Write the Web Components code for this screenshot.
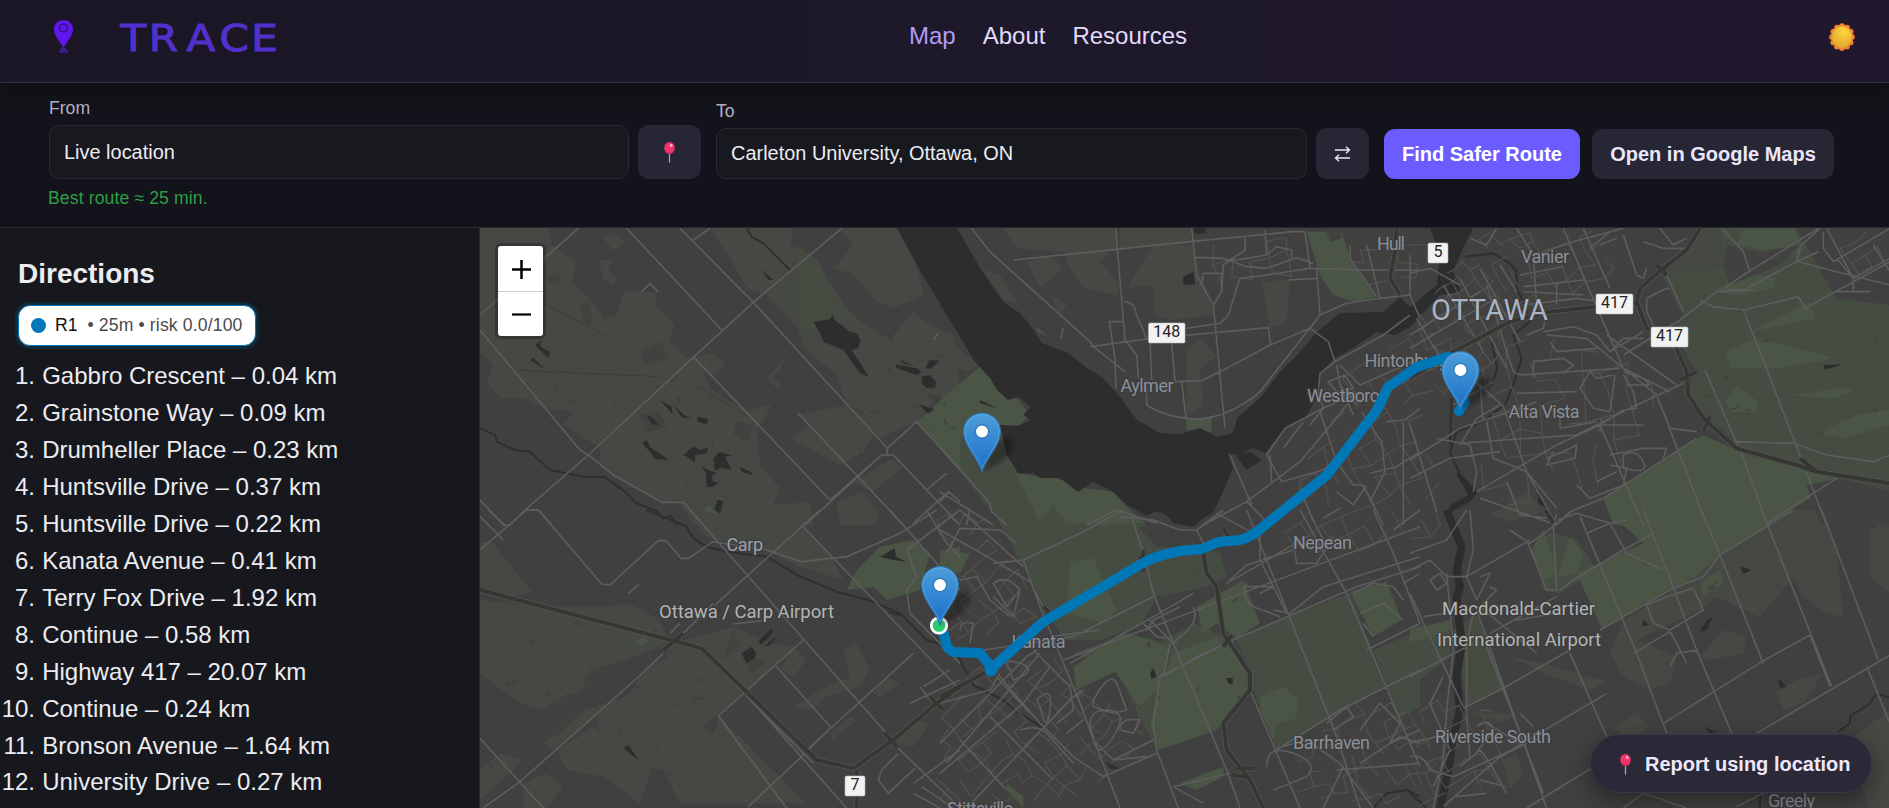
<!DOCTYPE html>
<html lang="en">
<head>
<meta charset="utf-8">
<title>TRACE</title>
<style>
  html, body { height: 100%; margin: 0; }
  body {
    background: #13131b;
    color: #ececf1;
    font-family: "Liberation Sans", Arial, sans-serif;
    overflow: hidden;
  }
</style>
</head>
<body>
<trace-app></trace-app>

<script>
const PIN = `
  <svg class="pushpin" width="11" height="21" viewBox="0 0 11 21">
    <path d="M5.5 11V20" stroke="#a9a0b5" stroke-width="1.3" stroke-linecap="round"/>
    <ellipse cx="5.5" cy="6" rx="5.3" ry="5.9" fill="#f2336d"/>
    <path d="M1 8.5Q5.5 13.5 10 8.5Q9 12 5.5 12T1 8.5Z" fill="#c81e56"/>
    <circle cx="7.2" cy="3.5" r="1.4" fill="#ffb3cb"/>
  </svg>`;

class TraceHeader extends HTMLElement {
  connectedCallback() {
    const shadow = this.attachShadow({ mode: 'open' });
    shadow.innerHTML = `
      <style>
        :host {
          display: flex;
          align-items: center;
          box-sizing: border-box;
          height: 83px;
          padding: 0 34px 9px 54px;
          background: linear-gradient(90deg, #1a1625, #1d182a 50%, #21182e);
          border-bottom: 1px solid #36313e;
          box-shadow: 0 4px 18px rgba(0, 0, 0, .35);
          position: relative;
          z-index: 2;
        }
        .brand { display: flex; align-items: center; gap: 46px; width: 855px; }
        .brand svg { display: block; overflow: visible; }
        nav { display: flex; gap: 27px; flex: 1; font-size: 24px; line-height: 28px; margin-top: -1px; }
        a { color: #e2dbfb; text-decoration: none; }
        a.active { color: #b19df6; }
      </style>
      <div class="brand">
        <svg width="19" height="33" viewBox="0 0 19 33">
          <path d="M9.5 0C4.1 0 0 4.2 0 9.6c0 6 5.8 12 9.5 18.4C13.2 21.6 19 15.600 19 9.600 19 4.200 14.900 0 9.500 0Z" fill="#6116ee"/>
          <circle cx="9.500" cy="7.800" r="4" fill="none" stroke="#2c1464" stroke-width="1.300"/>
          <path d="M7 28.500h5M5.500 30.300h8M5 32.200h9" stroke="#4a1cab" stroke-width="1.300"/>
        </svg>
        <svg width="164" height="30" viewBox="0 0 164 30">
          <text transform="scale(1.15 1)" x="1.3 25.9 58.7 87.5 115" y="28.500" font-family="DejaVu Sans, sans-serif"
            font-size="36.500" fill="#5131cc" stroke="#5131cc" stroke-width="1">TRACE</text>
        </svg>
      </div>
      <nav><a class="active">Map</a><a>About</a><a>Resources</a></nav>
      <svg width="26" height="28" viewBox="-13 -14 26 28">
        <defs><radialGradient id="s" cx=".6" cy=".25" r=".8">
          <stop stop-color="#ffd53d"/><stop offset="1" stop-color="#dfa52c"/>
        </radialGradient></defs>
        <g fill="#f38333" id="rays"></g>
        <ellipse rx="10" ry="10.800" fill="url(#s)"/>
      </svg>
    `;
    let rays = '';
    for (let i = 0; i < 12; i++) {
      const a = i * Math.PI / 6;
      rays += `<circle cx="${Math.sin(a) * 9.9}" cy="${Math.cos(a) * 10.9}" r="2.9"/>`;
    }
    shadow.querySelector('#rays').innerHTML = rays;
  }
}
customElements.define('trace-header', TraceHeader);

class TraceField extends HTMLElement {
  connectedCallback() {
    this.attachShadow({ mode: 'open' }).innerHTML = `
      <style>
        :host { display: flex; flex-direction: column; }
        label { color: #b5afc6; font-size: 17.6px; line-height: 20px; margin-bottom: 7px; }
        .row { display: flex; gap: 9px; }
        .box {
          flex: 1;
          box-sizing: border-box;
          height: var(--field-height, 54px);
          padding: 0 14px;
          display: flex;
          align-items: center;
          background: #18181f;
          border: 1px solid #2a2a33;
          border-radius: 10px;
          color: #ececf1;
          font-size: 19.95px;
          white-space: nowrap;
        }
      </style>
      <label>${this.getAttribute('label')}</label>
      <div class="row"><div class="box">${this.getAttribute('value')}</div><slot></slot></div>
    `;
  }
}
customElements.define('trace-field', TraceField);

class TraceButton extends HTMLElement {
  connectedCallback() {
    this.attachShadow({ mode: 'open' }).innerHTML = `
      <style>
        :host {
          display: flex;
          align-items: center;
          justify-content: center;
          box-sizing: border-box;
          height: 50px;
          background: #272634;
          border-radius: 11px;
          color: #ebe6fc;
          font-weight: bold;
          font-size: 20px;
          white-space: nowrap;
        }
        :host([primary]) { background: #6c5cff; color: #fff; }
      </style>
      <slot></slot>
    `;
  }
}
customElements.define('trace-button', TraceButton);

class RouteToolbar extends HTMLElement {
  connectedCallback() {
    this.attachShadow({ mode: 'open' }).innerHTML = `
      <style>
        :host {
          display: block;
          box-sizing: border-box;
          height: 145px;
          padding: 15px 55px 0 49px;
          background: linear-gradient(#131419, #13131b 26px);
          border-bottom: 1px solid #292932;
        }
        .fields { display: flex; align-items: flex-end; height: 81px; }
        .from { width: 652px; margin-right: 15px; }
        .to { width: 653px; margin-right: 15px; --field-height: 51px; }
        .locate { width: 63px; height: 54px; }
        .swap { width: 53px; height: 51px; }
        .find { width: 196px; margin-right: 12px; }
        .open { width: 242px; }
        .status { color: #2f9e44; font-size: 17.6px; line-height: 20px; letter-spacing: .12px; margin: 9px 0 0 -1px; }
      </style>
      <div class="fields">
        <trace-field class="from" label="From" value="Live location">
          <trace-button class="locate">${PIN}</trace-button>
        </trace-field>
        <trace-field class="to" label="To" value="Carleton University, Ottawa, ON">
          <trace-button class="swap">
            <svg width="17" height="16" viewBox="0 0 17 16" fill="none" stroke="#ebe6fc" stroke-width="1.400">
              <path d="M1 4H15M12 .8L15.500 4 12 7.200M16 12H2M5 8.800L1.500 12 5 15.200"/>
            </svg>
          </trace-button>
        </trace-field>
        <trace-button class="find" primary>Find Safer Route</trace-button>
        <trace-button class="open">Open in Google Maps</trace-button>
      </div>
      <div class="status">Best route ≈ 25 min.</div>
    `;
  }
}
customElements.define('route-toolbar', RouteToolbar);

class DirectionsPanel extends HTMLElement {
  #steps = [
    ['Gabbro Crescent', '0.04'], ['Grainstone Way', '0.09'], ['Drumheller Place', '0.23'],
    ['Huntsville Drive', '0.37'], ['Huntsville Drive', '0.22'], ['Kanata Avenue', '0.41'],
    ['Terry Fox Drive', '1.92'], ['Continue', '0.58'], ['Highway 417', '20.07'],
    ['Continue', '0.24'], ['Bronson Avenue', '1.64'], ['University Drive', '0.27'],
  ];

  connectedCallback() {
    this.attachShadow({ mode: 'open' }).innerHTML = `
      <style>
        :host {
          display: block;
          box-sizing: border-box;
          width: 480px;
          padding: 30px 0 0 18px;
          background: #17181d;
          border-right: 1px solid #2a2a33;
          overflow: hidden;
        }
        h2 { margin: 0 0 15px; font-size: 28px; line-height: 32px; }
        .chip {
          display: flex;
          align-items: center;
          box-sizing: border-box;
          width: 238px;
          height: 41px;
          padding-left: 12px;
          background: #fff;
          border: 1.5px solid #0077b6;
          border-radius: 12px;
          box-shadow: 0 0 0 3px rgba(0, 119, 182, .2);
          color: #111;
          font-size: 17.6px;
          white-space: pre;
        }
        .dot { width: 15px; height: 15px; border-radius: 50%; background: #0077b6; margin-right: 9px; }
        .meta { color: #4a4a4a; margin-left: 5px; letter-spacing: .14px; }
        ol { list-style: none; margin: 12px 0 0 -18px; padding: 0; font-size: 24px; line-height: 36.95px; }
        li { display: flex; gap: 7.200px; white-space: nowrap; }
        li span { width: 35px; display: flex; justify-content: flex-end; }
      </style>
      <h2>Directions</h2>
      <div class="chip"><span class="dot"></span>R1<span class="meta"> • 25m • risk 0.0/100</span></div>
      <ol>${this.#steps.map(([name, km], i) => `<li><span>${i + 1}.</span>${name} – ${km} km</li>`).join('')}</ol>
    `;
  }
}
customElements.define('directions-panel', DirectionsPanel);

// Map geometry. Each sheet has its own origin and is drawn at a third of its units.
const SHEETS = [
  {
    x: 480, y: 225,
    wood: `M0 10H210L215 60 290 110 275 170 340 230 370 280 410 270 430 200 530 200 525 240 583 300 570 350 620 400 640 395 700 385 737 420 700 450 670 440 690 490 800 560 875 535 850 590 830 610 840 720 900 790 880 840 990 830 1000 900H640L600 835 540 830 400 750 360 710 360 670 300 630 250 600 280 560 190 550 130 520 60 520 20 470 40 420 0 380Z
      M690 10H940L930 60 1010 100 1050 170 1100 250 1130 280 1240 350 1300 420 1320 480 1360 530 1310 590 1200 640 1150 560 1100 540 1070 450 970 370 955 310 860 210 800 190 750 100Z
      M1080 10H1250L1310 120 1330 210 1240 250 1190 230 1130 160 1060 130 1120 60Z
      M1240 330L1300 260 1350 300 1420 330 1440 480 1390 520 1320 500 1240 420Z
      M930 640L1000 600 950 570 1100 540 1200 600 1150 680 1080 720Z
      M1070 830L1150 800 1200 870 1180 900H1080Z
      M370 40L400 20 435 50 400 78ZM355 105L395 105 385 140 415 160 395 182 370 160Z
      M860 460L925 390 880 460 910 480 890 490Z M1120 770L1240 700 1265 730 1180 800Z`,
    wood2: `M955 60L955 315 1000 320 1100 280 1125 275 1060 220 1020 130Z`,
    land: `M205 155L235 140 245 170 210 180ZM295 235L325 235 340 290 320 300ZM480 380L540 350 570 400 500 420ZM480 570L540 560 560 610 500 620ZM1075 150L1100 135 1135 165 1110 200ZM770 590L820 600 800 650 760 630Z`,
    park: `M1440 475L1310 590 1440 735ZM670 855L690 842 705 862Z`,
    water: `M1000 290L1050 283 1057 270 1064 285 1110 320 1130 325 1142 345 1135 370 1115 375 1167 455 1140 445 1090 375 1030 350 1020 325Z
      M843 132L880 165 865 165ZM150 405L160 398 195 433ZM165 360L185 345 180 365 210 380 205 400ZM540 525L575 545 577 567ZM580 540L615 572 635 580 605 577Z
      M500 570L520 580 537 602 515 597ZM650 575L685 583 680 598 655 590ZM487 655L500 645 510 665 545 690 568 705 525 702 510 680Z
      M610 690L640 665 660 675 683 668 680 685 645 690 645 715 630 700ZM700 700L720 680 757 692 735 695 755 735 725 728 705 737ZM665 725L685 735 710 745 695 750 700 770 715 772 700 785H680L678 745ZM780 725L815 742V750L785 740ZM703 855L712 825 730 828 722 862Z
      M1245 418L1310 430 1325 440 1310 450 1250 430ZM1257 402L1300 423 1270 415ZM1335 430L1350 405 1378 407 1355 430ZM1325 455L1350 450 1368 470 1365 490 1340 490 1325 475ZM1315 538L1362 552 1345 566Z`,
    creek: `M0 610L45 630 50 650 105 675 150 680 210 735 310 755 375 757 435 800 470 835 530 858 550 880 570 872 595 900M800 10L815 35 850 55 930 135`,
    road: `M295 10L0 270M440 10L725 315M600 10L820 232 1222 670V690H1205L975 900M1085 10L820 232 640 397 325 690 135 855 90 900M640 395L1050 825M0 315L300 675 325 690 400 750 545 832H610L670 900M955 565L1270 900M1310 590L1222 670M1222 690H1240L1340 795 1440 900M1310 590L1440 735M1050 825L1205 690M640 45L690 10M0 825L70 900H90M135 855H175L215 900M485 200L510 175 533 200M1340 795L1398 745M1360 345L1375 325M1300 895L1405 800 1440 830`,
    hair: `M190 235L400 345M100 435L540 455M655 485L800 570`,
  },
  {
    x: 940, y: 225,
    wood: `M190 10H530V60L480 110 540 180 530 210 430 190 390 130 370 80 230 70ZM540 10H755V55L540 70ZM260 110L330 90 370 130 300 190ZM640 60L755 60 790 170 820 270 700 285 640 270V180L560 190ZM330 205L380 240 360 270ZM965 170L1050 165 1040 290 990 310ZM125 130L180 150 230 230 190 225ZM740 370L780 340 830 395 780 430 790 540 740 570ZM1030 430L930 540 900 560Z M0 330L120 420 80 440 0 400Z`,
    park: `M1100 20H1205L1230 100 1310 215 1240 230 1180 210 1140 150ZM738 582L815 575V620L740 615ZM0 525L125 420 165 470 230 520 270 570 240 600 180 605 60 640 0 610ZM225 745L290 755 350 760 440 790 520 800 580 870 620 895 H380L340 840 300 890ZM290 305L325 335 290 320Z`,
    wood2: `M0 600L180 600 240 740 400 790 520 800 620 905H190L60 740 0 670Z`,
    land: `M1160 20L1200 18 1205 40 1170 50Z`,
    water: `M120 525L172 550 120 535ZM730 155L760 140 765 178 730 180ZM760 10H797V25L765 27ZM890 695L930 680 965 705 920 735Z M180 600L245 610 280 690 290 745 235 745 200 690Z`,
    road: `M95 10L150 80 450 350 460 365 555 440M220 105L750 50 1060 20 1095 20M527 10L555 345 590 390 595 460M755 10L770 150 820 240 855 610M450 365L620 342 985 308 992 360M740 310L840 295 865 270 900 160 980 150 1110 130M765 97L850 100 920 125 980 130 1070 98 1120 115M820 240L845 200 850 120 915 75V35M855 105L890 105 980 90 975 15M980 90L1010 65 1055 75V98M620 340L590 270 580 240 553 227M508 290H550M508 290L525 400 528 490M630 345L635 465M695 355L705 470 785 467 860 430 990 360 1110 310 1140 270 1220 235 1320 220 1410 210M620 485V540Q680 580 780 583 880 570 960 500L1140 270 1130 130M725 470L738 580M1110 310L1165 350 1185 410 1140 445 1135 500 1150 550 1110 600M1185 410L1330 330 1410 270M870 690L935 840M790 900L920 830 1080 710 1190 580 1250 500M980 690L1035 610 1150 550 1260 500M980 690L1025 770 1150 735 1260 640M1030 670L1090 590M1140 560L1190 710 1240 780 1270 780 1330 900M1190 420L1200 480 1250 540M1165 470L1215 450 1240 490 1190 500ZM1200 420L1260 480 1350 440 1440 400M1265 560L1290 600 1325 650 1335 740 1290 830M1200 480L1240 570M1340 590L1395 585 1440 550M1290 745L1370 725 1440 680M1045 165L1130 160M1095 20L1110 130 1280 135H1440M1280 60L1320 220M1230 60V100L1310 215M1410 90V210L1440 280M370 308L362 340M785 182L790 145H845V200M440 900L530 855 650 895M0 760L20 745M0 800L160 900M0 830L30 800M90 850L80 900M1280 780L1240 840 1190 800M990 690L995 770M920 830L990 900M1080 790L1120 890M1200 850L1150 880M1390 590V900M0 665L150 835 155 860 200 900`,
    hwy: `M1370 10L1365 80 1350 160 1380 210`,
  },
  {
    x: 1410, y: 225,
    wood: `M865 10L830 70 760 130 760 160 815 270 790 310 850 430 840 500 880 590 960 620 1000 690 1440 860V240L1280 220 1160 10Z M240 870L350 800 400 860 300 890Z`,
    wood2: `M760 140L820 270 790 320 870 450 840 500 960 640 1010 680 1440 770V240L1280 222 1155 10H930L940 120 960 180 1090 120 1160 110Z`,
    park: `M580 820L880 630 1010 690 1300 760 1070 900H610ZM1230 625L1330 570 1440 555V600L1300 640ZM945 380L1040 340 1280 400 1100 430 960 430ZM1020 320L1200 230 1215 280 1120 300ZM945 530L980 480 1045 530 1040 560 965 560ZM1130 510L1220 500 1300 485 1330 500 1270 520ZM910 200L1000 145 1100 160 1090 190 1000 210ZM1000 10H1155L1180 80 1100 100 1040 70 980 60Z`,
    land: `M950 60L1050 80 1170 60 1110 120 960 180 940 120ZM1190 780L1290 760 1440 800V900H1230Z`,
    water: `M1240 420L1297 418 1245 434ZM385 800L410 850 385 835ZM145 740L205 800 180 830 110 870 120 840 175 810 140 750Z`,
    creek: `M165 95L250 85 300 115 320 140V190L340 230 360 290 310 330 335 400 310 480 285 540M275 545L220 590 140 620 120 680 150 750M245 350L262 430 245 480M125 520L120 660`,
    road: `M1225 10L1000 150 950 185 955 195H1000L1160 110 1225 80M1160 110L1170 65 1230 10M935 10L1000 80 1020 140M640 390L810 285 920 200 1030 195M870 225L910 245 1000 255 1165 215 1185 250 1440 110M1000 255L1050 380 1250 900M885 435L1000 700 1070 895M980 650L1150 655 1250 690 1390 710 1440 690M1280 760L1070 895M1280 100L1330 160 1440 100M1240 20V70L1270 110 1440 10M1165 110L1280 140 1440 180M1250 10L1330 160V200M1390 60L1440 140
      M460 10L540 200 640 430 740 510 890 900M520 10L600 190M320 10L370 90 380 240M370 90L490 50 640 10M340 185L520 165M330 150L460 125M440 180V240M340 240L500 220 650 240M340 200L520 210M400 320L490 305 560 330 600 380 700 320M410 330L530 340 640 430 780 500M590 330L800 480M310 440L330 450 630 430M370 460V410L460 400 490 420 460 445M310 440L290 380 230 180M350 330L400 310 410 260M540 440L510 490 550 550 600 560 615 450M320 505L500 500M150 655L280 645 500 630 660 550 820 475M0 705L150 610 300 560 380 530M150 660L200 580 270 540M0 460L90 420 210 480 280 545M280 545L350 740 440 900M410 700L460 680 500 660 495 700 410 720 430 680M200 800L440 660 570 600 640 555 680 550 670 500 640 450M570 600L700 900M700 600L570 600M740 510L780 610 860 620M860 640L580 820 480 860M190 800L200 740 180 660 80 640M0 600L80 860M0 760L120 700 270 680M210 820L440 900M500 780L540 820 640 780 650 730 600 720M640 690Q680 670 700 710T640 730ZM560 770L620 740M600 690L700 670 770 670 760 700M290 770L330 870 420 880M230 590L250 700 350 740 440 850M480 860L440 900M130 540L200 500 250 470M210 480L220 590M0 145L60 130 150 180M0 370L240 230M0 330L210 200M70 360L130 460M100 180L220 380M150 160L290 430M210 130L330 350M270 120L320 200M20 280L110 430M180 40L230 60 260 10M640 30L680 150 700 160 710 130M750 10L790 60 830 40M700 50L760 70 820 70M540 70L600 20M820 260L770 150M710 220L770 190 780 190M710 220V260L730 300M570 60L620 40M600 380L640 340 700 340M420 350L440 380 560 370M540 440L560 460 610 450M450 560V610L560 590M570 620L575 580M640 440L700 460 720 480 650 480M1280 200H1380`,
    hwy: `M870 10L830 75 760 130 690 190 680 230 710 310 790 350 830 440 835 510 880 580 980 670 1160 720 1220 740 1440 775M0 460L130 380 300 290 420 260 560 245 680 235M1170 700L1220 740M880 620L900 575M740 120L770 150M810 465L860 440`,
  },
  {
    x: 480, y: 510,
    wood: `M0 100L30 90 155 245 100 260 0 230ZM0 270L200 290 440 290 540 350 570 390 540 410 440 450 340 500 310 540 180 600 150 590 90 560 0 490ZM330 300L440 280 470 290 540 330 560 380 340 320ZM570 400L760 350 870 400 950 410 810 530 720 610 640 670 630 580 680 560 600 490 540 520ZM500 470L600 430 720 560 640 560 640 640 700 670 720 620 980 880H600L550 780 380 750 350 620 230 720 190 700 310 600 440 560ZM230 720L340 650 440 720 520 760 480 880 370 800 260 780ZM0 780L60 730 130 750 80 800 0 870ZM130 820L200 790 250 830 200 894H130ZM680 10H1010L960 40 1060 150 1090 210 960 170 830 110 700 90 650 60ZM1090 420L1130 400 1170 480 1140 530 1040 560 1000 600 940 590 1020 540 1110 500ZM900 480L940 410 980 450 940 500ZM1180 550L1220 500 1260 520 1200 560ZM1050 670L1110 620 1130 630 1060 690ZM1250 700L1310 630 1350 640 1300 710Z`,
    park: `M1130 180L1200 110 1300 90 1350 130 1320 240 1220 270 1180 230 1100 240ZM460 395L490 380 512 395 480 408ZM1380 130L1440 110V180L1400 170ZM670 5L715 0 710 10Z`,
    land: `M180 600L270 550 290 590 310 600 230 680ZM330 480L430 450 440 510 370 560 310 530ZM760 360L780 400 730 450ZM780 420L860 460 810 490Z`,
    water: `M1200 140L1245 115 1247 140 1280 155 1240 150ZM785 430L815 410 828 430 825 445 800 460ZM835 395L875 355 880 365 845 405ZM850 410L895 375 870 405ZM430 715L445 705 478 753ZM703 0H725L718 10Z`,
    creek: `M500 0L560 25 620 50 640 85 680 110 740 125 860 140 960 200 1070 245 1165 270M1165 270L1260 310 1340 390 1440 420M1225 305L1260 315`,
    road: `M0 20L70 90M25 0L75 45M0 120L140 0H175L365 222 390 225 535 92H558L603 145H625L700 95 860 120 965 155 1100 140 1260 70 1370 0M630 0L1215 665M965 45L1440 540M1020 0L705 285M610 370L700 280M570 370L600 340M445 250L478 222M760 342L845 332M970 390L715 618 920 894M885 465L1055 655M1300 430L980 720M0 685L190 894M550 430L465 510 120 815 10 894M790 545L1100 894M800 560L1000 760M1230 0L1440 240M1440 510L1290 580M1050 655L985 720M970 735L805 890M1255 715L1440 894M1205 780L1255 730M1205 780L1195 810 1225 850 1305 775M1440 0L1280 120 1310 200 1280 240 1290 310 1440 460M1340 0L1400 100 1440 140M1330 530L1410 480M1320 530L1350 570M1300 820L1440 720M1325 830L1420 894M1300 850L1380 894`,
    hwy: `M0 240L590 395 665 415 1010 750 1120 775 1240 690 1370 580 1440 530M1130 780V894M550 420L610 370M1350 560L1390 600M1215 670L1250 710`,
  },
  {
    x: 940, y: 510,
    wood2: `M160 0H550L650 110 780 120 840 130 860 200 800 230 650 260 600 350 480 390 370 390 250 170 190 60ZM885 380L1230 250 1340 530 1010 715 940 540 930 480ZM400 430L530 480 650 720 800 660 920 560 880 390 760 340 660 400 570 370ZM1300 420L1440 360V590L1380 625Z`,
    park: `M390 155L460 145 480 190 530 300 490 340 380 310ZM770 290L910 210 960 340 890 385 830 340 790 370ZM400 470L550 370 640 390 690 420 660 530 600 590 525 485 410 540ZM700 430L830 380 920 460 920 560 830 660 730 695 655 720 630 640 660 530ZM1230 245L1340 215 1385 330 1300 380ZM960 560L1030 530 1075 570 1070 625 1010 640 1000 690 960 600ZM720 820L850 770V800L770 840ZM0 120L90 130 60 190 0 190ZM400 20L480 0 540 10 500 50ZM200 820L250 860V894L200 840Z`,
    water: `M590 0H820L760 50 700 40 680 10ZM630 490L640 475 650 500 635 507ZM858 505L878 503V524L865 520ZM497 755L548 780 510 775Z`,
    creek: `M55 440L100 525 190 570 230 605 320 660M1300 894L1340 850 1400 840 1440 860`,
    road: `M0 60L160 150 270 215 310 290M60 0L250 170M20 130L60 55 180 60 230 100M160 160L250 150 420 70 550 0M540 20L640 30 720 60 770 60 850 0M575 20L610 130 640 250 700 400 860 780 900 894M770 60L800 120M370 450L1440 50M250 150L300 290 420 580 540 894M660 500L880 390 1250 230 1440 170M660 500L640 640 650 720 715 894M640 260L400 380 130 420M330 380L480 360M630 330L700 400 720 380M610 340L650 380 680 385M760 290Q780 340 720 380M690 400L670 500 770 440 880 390M720 290L640 330 620 360M390 460L640 320 760 250M1080 0L1220 250 1440 770M920 0L1040 300 1190 680 1260 894M930 540L1080 894M1010 720L1200 600 1440 480M1000 300L1050 310 1150 230 1440 140M860 220L1000 140 1100 80M870 210L920 165 1060 120M830 10L960 80V150L1040 310M920 230H1000L960 250M920 220Q900 260 940 290L1020 320M1060 100L1070 160 1130 160 1180 80M1110 10L1160 110M1300 0L1360 130 1440 340M1240 250L1300 220 1360 230 1390 270M1260 310L1330 280 1390 330M1300 380L1270 340M1280 420L1440 340M700 830L790 880M700 830L870 790M1010 715L1100 690 1200 760 1300 894M980 770Q980 700 1060 730T1100 800L1000 840M1160 640L1220 590 1240 620 1180 660M1260 660L1320 580 1380 640 1350 700 1440 660M1190 780L1440 760M1210 770L1150 894M1260 760L1380 680 1440 700M0 700L260 440 290 420M0 580L150 540 180 490M20 760L300 430M80 894L400 560 430 540M0 790L250 580 330 470M180 500L300 640 400 740 490 800 650 730M240 660Q300 640 330 680L400 760M60 690L200 840M150 620L340 810M170 500L270 610M280 420L390 530 400 600 350 640M460 570Q510 480 530 520L560 600 520 610 460 590ZM460 680Q430 600 500 600T520 680 460 680ZM540 660Q540 620 600 630L580 670ZM410 550L460 690 520 750 620 740M430 630L380 670M520 750L640 690M290 570Q340 520 330 600T300 590ZM210 480Q180 440 240 460T220 510ZM160 220Q200 190 240 240L200 290ZM160 260L220 320 240 240M60 360Q60 330 100 340L90 400M60 210L110 200 150 270 210 320M1440 0L1360 60M1390 220L1440 190`,
    hwy: `M790 130L800 190 830 230 850 370 930 490V540L850 640 860 720 930 810 970 894M875 795L920 800M890 775H945M850 410L875 375M0 560L150 480M610 120V180L600 140M850 55L870 90M310 290L330 310`,
  },
  {
    x: 1410, y: 510,
    wood2: `M120 370L200 310 280 535 170 590 150 440ZM0 350L120 340V440L40 500 0 560ZM370 125L420 65 500 90 560 180 450 250 400 240Z`,
    wood: `M600 430L640 330 790 240 830 190 1050 50 1150 0H1240L1280 120 1300 320 1250 310 1180 260 1150 200 1050 320 980 290 920 260 870 300 680 390 800 440 780 520 720 540 640 500ZM870 440L940 360 1010 380 1000 430 900 450ZM1100 545L1160 510 1240 490 1180 580 1120 600ZM610 650L680 610 720 650 650 690ZM300 440L400 460 590 515 540 540 400 490ZM1380 60L1440 30V250L1380 200ZM1440 600L1300 700 1380 894H1440ZM180 610L320 610 280 640ZM280 750L320 730 340 790 300 840Z`,
    park: `M360 125L400 60 430 150 440 200 400 210ZM500 190L700 100 590 0H690L1070 0 1080 50 930 135 850 205 780 240 575 355ZM480 80L520 130 500 190 440 200ZM870 220L930 180 940 220 880 255ZM0 360L120 330V360L0 400Z`,
    water: `M990 170L1010 175 1025 180 1000 192ZM1105 510L1112 510 1130 530 1110 535ZM870 365L890 330 908 320 890 360ZM695 350L700 330 717 345ZM880 650L920 665 900 670Z`,
    creek: `M1285 665L1320 640V620L1380 580 1400 552 1440 563M0 850L50 894M1050 850V894`,
    road: `M700 0L770 180 860 420 965 670M510 20L680 430 770 670M875 0L930 135 1060 460M1055 0L1265 530M1235 0L1280 120 1405 450M1370 470L1440 640M570 360L790 235 880 200 930 135 1150 0M490 210L640 120 730 70M300 60L360 100 430 50 490 0M440 10L430 50 440 240 410 240 350 90M445 30L500 10 600 40 650 130 760 180M530 70L600 40 650 30M450 240L490 210M670 430L780 365 800 400 830 460M710 285L770 260 850 235 880 300 780 360 730 340ZM780 470L800 430 865 420M760 640L1055 455 1200 375M1040 670L1440 435M1260 530L1200 375M160 595L280 535 480 420M270 740L590 550M100 890L270 740 350 700M0 500L190 400M480 430L590 680M0 700L120 670M200 300L410 894M230 410L400 850M350 894L600 740M0 130L110 90 170 0M0 180L60 150 110 200 170 200 360 90M170 200L200 270M210 200L240 190 200 270M240 230L260 240 210 290M60 210L90 190 110 220 80 240ZM110 190L120 300M180 0L190 120 170 200M0 250L50 360 160 590M40 320L110 310M100 500L60 580 120 720 70 830M0 740Q40 730 60 780L130 800 240 750 350 700M150 770L210 720 240 760 290 850M200 650Q240 620 250 660L190 740M210 810L290 830M140 860L230 850M230 640L330 700M330 610L370 650M210 290L380 430M320 330L440 310M440 260L240 370M190 310L170 400V620L180 740M120 300L130 420 110 600 100 740 70 894M640 894L700 850 830 894M980 890L1060 850`,
    hwy: `M405 0L430 40`,
    river: `M110 0L155 110 140 180 150 230 140 260 155 400 140 500 150 600 130 680 115 780 90 894`,
  },
];

const RIVER = `M897 228L918 267 960 337 975 362 990 378 997 390 1008 400 1018 397 1031 407 1023 415 1031 420 1018 426 1000 425 1007 452 1018 473 1028 469 1040 478 1060 478 1078 492 1093 482 1113 492 1127 505 1147 516 1158 510 1173 520 1187 525 1213 513 1223 492 1233 468 1228 453 1240 456 1252 448 1265 453 1285 428 1305 418 1320 392V373L1335 358 1353 348 1377 332 1395 335 1410 327 1440 295 1461 292 1453 272 1460 255 1473 228H1430L1440 255 1437 285 1410 307 1400 297 1383 312 1340 313 1317 332 1300 352 1280 372 1260 398 1237 418 1233 433 1217 437 1200 428 1180 434 1160 433 1137 420 1120 397 1103 378 1087 368 1068 353 1042 343 1030 325 1020 313 1003 302 980 268 957 228Z`;

const ROUTE = `M939 626L944 634 947 647 953 652 980 653 992 668 1010 652 1043 622 1143 563Q1155 556 1180 551L1202 549 1218 542 1240 540Q1252 537 1264 526L1327 475 1377 410 1388 387 1417 367 1447 357 1461 359M1465 402L1459 411`;

// Built-up areas filled with small streets: outline, angle, block size.
const TOWNS = [
  [[[935, 505], [985, 512], [1015, 560], [1040, 620], [985, 640], [945, 640]], 40, 15],
  [[[940, 700], [985, 660], [1060, 650], [1090, 700], [1150, 700], [1155, 755], [1080, 808], [930, 808]], 42, 15],
  [[[1330, 380], [1410, 330], [1440, 400], [1450, 530], [1400, 560], [1260, 560], [1300, 480]], 28, 18],
  [[[1300, 740], [1350, 700], [1420, 690], [1450, 808], [1290, 808]], 25, 15],
  [[[1410, 310], [1470, 250], [1510, 300], [1500, 370], [1440, 400]], 32, 11],
  [[[1470, 228], [1640, 228], [1610, 280], [1520, 320]], 28, 15],
  [[[1480, 330], [1600, 330], [1680, 390], [1620, 480], [1540, 520], [1480, 500]], 10, 23],
  [[[1190, 232], [1300, 232], [1310, 280], [1210, 290]], 8, 19],
  [[[1830, 228], [1889, 228], [1889, 285], [1845, 275]], 32, 14],
  [[[1410, 690], [1500, 700], [1510, 790], [1410, 800]], 28, 17],
  [[[1320, 232], [1440, 232], [1420, 290], [1345, 300]], 3, 18],
];

// Wooded areas sprinkled with small clearings
const THICKETS = [[500, 340, 750, 515, 150], [850, 255, 950, 450, 70], [490, 620, 730, 800, 120], [1660, 280, 1885, 460, 40], [1090, 540, 1260, 720, 30], [1640, 530, 1830, 700, 40]];

const LABELS = [
  ['Hull', 1377, 250, 28], ['Vanier', 1521, 263, 48], ['OTTAWA', 1431, 320, 117, 29, '#a9b3c2'],
  ['Hintonburg', 1364.5, 367, 84], ['Westboro', 1307, 402, 73], ['Aylmer', 1120.5, 392, 53],
  ['Alta Vista', 1508.5, 418, 71], ['Carp', 726.5, 551, 36.5, 18, '#9ba0ab'],
  ['Ottawa / Carp Airport', 659, 618, 175, 18.5, '#b4b4b4'], ['Kanata', 1011.5, 648, 54],
  ['Nepean', 1293, 548.5, 59], ['Barrhaven', 1293, 749, 77], ['Stittsville', 947, 815, 66],
  ['Macdonald-Cartier', 1442, 615, 153, 18.5, '#b4b4b4'],
  ['International Airport', 1437, 645.5, 164, 18.5, '#b4b4b4'],
  ['Riverside South', 1435, 743, 116], ['Greely', 1768, 807, 47],
];

const SHIELDS = [['148', 1148.5, 323, 36.5], ['5', 1428, 243, 20], ['417', 1596, 294, 37], ['417', 1651, 327, 37], ['7', 845, 776, 20]];

class MapView extends HTMLElement {
  #seed = 7;

  connectedCallback() {
    const shadow = this.attachShadow({ mode: 'open' });
    shadow.innerHTML = `
      <style>
        :host { display: block; position: relative; overflow: hidden; background: #404040; }
        .canvas { display: block; width: 1409px; height: 580px; }
        .wood { fill: #454843; }
        .wood2 { fill: #454d43; }
        .park { fill: #4a5546; }
        .land { fill: #41413f; }
        .water { fill: #2d2d2d; }
        .creek, .road, .hair, .hwy, .casing, .river { fill: none; stroke-linejoin: round; }
        .creek { stroke: #2f2f2f; stroke-width: 6; }
        .river { stroke: #2d2d2d; stroke-width: 24; }
        .hair { stroke: #3c3d3a; stroke-width: 3; }
        .road { stroke: #5d5d5d; stroke-width: 4.8; }
        .casing { stroke: #535352; stroke-width: 17; }
        .hwy { stroke: #363633; stroke-width: 12; }
        .route { fill: none; stroke: #0077b6; stroke-width: 10; stroke-linecap: round; stroke-linejoin: round; }
        .label { font-family: Roboto, sans-serif; paint-order: stroke; stroke: #3d3d3d; stroke-width: 2.5; stroke-opacity: .7; }
        .shield { font: 16px Roboto, sans-serif; fill: #222; text-anchor: middle; }
        .zoom {
          position: absolute;
          left: 18px;
          top: 18px;
          width: 45px;
          height: 90px;
          background: #fff;
          border-radius: 3px;
          box-shadow: 0 0 0 3px rgba(0, 0, 0, .25);
          display: flex;
          flex-direction: column;
        }
        .zoom span { flex: 1; display: flex; align-items: center; justify-content: center; padding: 2px 0 0 2px; }
        .zoom span + span { border-top: 1px solid #ccc; }
        .report {
          position: absolute;
          right: 17px;
          bottom: 15px;
          box-sizing: border-box;
          width: 282px;
          height: 59px;
          border-radius: 30px;
          border: 1px solid #393748;
          background: #2b2938;
          box-shadow: 0 8px 24px rgba(0, 0, 0, .4);
          color: #ece7fd;
          display: flex;
          align-items: center;
          padding: 2px 0 0 29px;
          gap: 14px;
          font-size: 20px;
          font-weight: bold;
          white-space: nowrap;
        }
      </style>
      <svg class="canvas" viewBox="480 228 1409 580">
        <defs>
          <linearGradient id="pin" x2="0" y2="1"><stop stop-color="#4c9dd8"/><stop offset="1" stop-color="#1a6fc9"/></linearGradient>
          <filter id="soft" x="-50%" y="-50%" width="200%" height="200%"><feGaussianBlur stdDeviation="2.500"/></filter>
        </defs>
        ${this.#towns()}
        ${this.#layer('wood')}${this.#layer('wood2')}${this.#layer('park')}${this.#layer('land')}
        ${this.#thickets()}
        ${this.#layer('hair')}
        <path class="water" d="${RIVER}"/>
        ${this.#layer('water')}${this.#layer('creek')}${this.#layer('river')}
        ${this.#streets()}
        ${this.#layer('road')}${this.#layer('hwy', 'casing')}${this.#layer('hwy')}
        ${LABELS.map((l) => this.#label(...l)).join('')}
        ${SHIELDS.map(([t, x, y, w]) => `
          <rect x="${x}" y="${y}" width="${w}" height="20" rx="1.5" fill="#f2f2f2" stroke="#bbb" stroke-width=".6"/>
          <text class="shield" x="${x + w / 2}" y="${y + 14}">${t}</text>`).join('')}
        <path class="route" d="${ROUTE}"/>
        <circle cx="991" cy="670" r="6.500" fill="#0077b6"/>
        <circle cx="939" cy="625.500" r="7.700" fill="#2ecc71" stroke="#fff" stroke-width="2.800"/>
        ${[[982, 472], [1460.5, 410.5], [940, 625.5]].map(([x, y]) => this.#marker(x, y)).join('')}
      </svg>
      <div class="zoom">
        <span><svg width="19" height="19"><path d="M0 9.500H19M9.500 0V19" stroke="#000" stroke-width="2.500"/></svg></span>
        <span><svg width="19" height="19"><path d="M0 9.500H19" stroke="#000" stroke-width="2.200"/></svg></span>
      </div>
      <div class="report">${PIN}Report using location</div>
    `;
  }

  #random() {
    this.#seed = (this.#seed * 16807) % 2147483647;
    return this.#seed / 2147483647;
  }

  #layer(name, cls = name) {
    return SHEETS.filter((s) => s[name])
      .map((s) => `<path class="${cls}" transform="translate(${s.x} ${s.y}) scale(.33333)" d="${s[name]}"/>`)
      .join('');
  }

  #towns() {
    return TOWNS.map(([ring]) => `<polygon points="${ring.join(' ')}" fill="#42413f"/>`).join('');
  }

  #inside([x, y], ring) {
    let hit = false;
    for (let i = 0, j = ring.length - 1; i < ring.length; j = i++) {
      const [xi, yi] = ring[i];
      const [xj, yj] = ring[j];
      if (yi > y !== yj > y && x < (xj - xi) * (y - yi) / (yj - yi) + xi) hit = !hit;
    }
    return hit;
  }

  // Bent lattice with some blocks left open
  #streets() {
    let d = '';
    TOWNS.forEach(([ring, angle, step]) => {
      const a = -angle * Math.PI / 180;
      const cx = ring.reduce((s, p) => s + p[0], 0) / ring.length;
      const cy = ring.reduce((s, p) => s + p[1], 0) / ring.length;
      const grid = [];
      for (let i = -12; i <= 12; i++) {
        grid[i + 12] = [];
        for (let j = -12; j <= 12; j++) {
          const u = i * step + (this.#random() - .5) * step * .45;
          const v = j * step + (this.#random() - .5) * step * .45;
          grid[i + 12][j + 12] = [cx + u * Math.cos(a) - v * Math.sin(a), cy + u * Math.sin(a) + v * Math.cos(a)];
        }
      }
      const link = (p, q) => {
        if (this.#random() < .55 && this.#inside(p, ring) && this.#inside(q, ring)) {
          d += `M${p[0].toFixed(1)} ${p[1].toFixed(1)}L${q[0].toFixed(1)} ${q[1].toFixed(1)}`;
        }
      };
      for (let i = 0; i < 24; i++) {
        for (let j = 0; j < 24; j++) {
          link(grid[i][j], grid[i + 1][j]);
          link(grid[i][j], grid[i][j + 1]);
        }
      }
    });
    return `<path d="${d}" fill="none" stroke="#535352" stroke-width="1.1" stroke-linecap="round"/>`;
  }

  #thickets() {
    let d = '';
    THICKETS.forEach(([x0, y0, x1, y1, count]) => {
      for (let n = 0; n < count; n++) {
        const x = x0 + this.#random() * (x1 - x0);
        const y = y0 + this.#random() * (y1 - y0);
        const r = 2 + this.#random() * 6;
        d += `M${x.toFixed(1)} ${y.toFixed(1)}`;
        for (let k = 0; k < 4; k++) {
          d += `l${((this.#random() - .4) * r).toFixed(1)} ${((this.#random() - .5) * r).toFixed(1)}`;
        }
        d += 'Z';
      }
    });
    return `<path d="${d}" fill="#40423e"/>`;
  }

  #label(text, x, y, width, size = 18, color = '#8a8f99') {
    return `<text class="label" x="${x}" y="${y}" font-size="${size}" fill="${color}" textLength="${width}">${text}</text>`;
  }

  #marker(x, y) {
    return `
      <g transform="translate(${x} ${y})">
        <path d="M0 0L12 -24Q20 -38 29 -32 33 -22 18 -9Z" fill="#000" opacity=".32" filter="url(#soft)"/>
        <path d="M0 0C-3 -13 -18.500 -26 -18.500 -40.500A18.500 18.500 0 0 1 18.500 -40.500C18.500 -26 3 -13 0 0Z" fill="url(#pin)" stroke="#2e75b0" stroke-width="1"/>
        <path d="M0 -4C-4 -15 -17 -27 -17 -40.500A17 17 0 0 1 17 -40.500C17 -27 4 -15 0 -4Z" fill="none" stroke="#7ab7e2" stroke-opacity=".45"/>
        <circle cy="-40.500" r="6.600" fill="#fff" stroke="#2f78b4" stroke-width="1.200"/>
      </g>`;
  }
}
customElements.define('map-view', MapView);

class TraceApp extends HTMLElement {
  connectedCallback() {
    this.attachShadow({ mode: 'open' }).innerHTML = `
      <style>
        :host { display: flex; flex-direction: column; height: 100vh; }
        main { display: flex; flex: 1; min-height: 0; }
        directions-panel { flex: none; }
        map-view { flex: 1; min-width: 0; }
      </style>
      <trace-header></trace-header>
      <route-toolbar></route-toolbar>
      <main>
        <directions-panel></directions-panel>
        <map-view></map-view>
      </main>
    `;
  }
}
customElements.define('trace-app', TraceApp);
</script>
</body>
</html>
